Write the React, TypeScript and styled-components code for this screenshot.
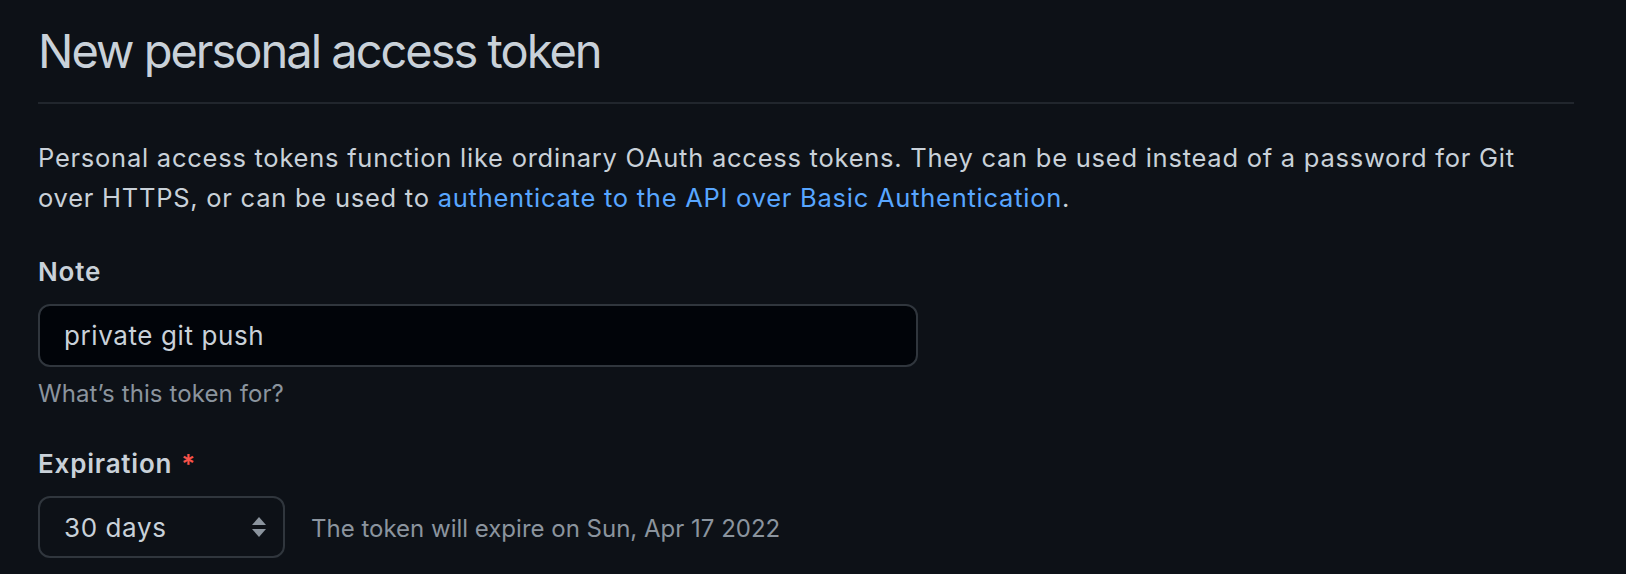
import styled, { createGlobalStyle } from "styled-components";

const GlobalStyle = createGlobalStyle`
  html, body {
    margin: 0;
    padding: 0;
    background: #0d1117;
  }

  body {
    font-family: Inter, "Noto Sans", sans-serif;
    color: #c9d1d9;
  }
`;

const Page = styled.div`
  width: 1536px;
  padding: 21px 0 0 38px;
  min-height: 553px;
`;

const Subhead = styled.h1`
  margin: 0;
  padding-bottom: 21px;
  border-bottom: 2px solid #21262d;
  font-size: 47px;
  line-height: 60px;
  font-weight: 400;
  letter-spacing: -2px;
  color: #c9d1d9;
`;

const Intro = styled.p`
  margin: 34px 0 0;
  font-size: 25.5px;
  line-height: 40px;
  letter-spacing: 0.75px;
  color: #c9d1d9;

  a {
    color: #58a6ff;
    text-decoration: none;
  }
`;

const Field = styled.div<{ $gap: number }>`
  margin-top: ${(p) => p.$gap}px;
  display: flex;
  flex-direction: column;
`;

const Label = styled.label`
  font-size: 26px;
  line-height: 39px;
  font-weight: 600;
  letter-spacing: 0.8px;
  color: #c9d1d9;
  margin-bottom: 13px;

  span {
    color: #f85149;
    margin-left: 9px;
  }
`;

const TextInput = styled.div`
  box-sizing: border-box;
  width: 880px;
  height: 63px;
  padding: 0 24px;
  display: flex;
  align-items: center;
  background: #010409;
  border: 2px solid #30363d;
  border-radius: 12px;
  font-size: 26px;
  letter-spacing: 0.6px;
  color: #c9d1d9;
`;

const Hint = styled.p`
  margin: 9px 0 0;
  font-size: 24px;
  line-height: 36px;
  letter-spacing: 0.1px;
  color: #8b949e;
`;

const Row = styled.div`
  display: flex;
  align-items: center;
  gap: 26px;
`;

const Select = styled.div`
  box-sizing: border-box;
  width: 247px;
  height: 62px;
  padding: 0 16px 0 24px;
  display: flex;
  align-items: center;
  justify-content: space-between;
  background: #0d1117;
  border: 2px solid #30363d;
  border-radius: 12px;
  font-size: 26px;
  letter-spacing: 0.6px;
  color: #c9d1d9;
`;

const Note = styled.span`
  font-size: 24px;
  color: #8b949e;
  padding-top: 2px;
`;

function SortArrows() {
  return (
    <svg width="16" height="20" viewBox="0 0 16 20">
      <path d="M8 0 L15 8 L1 8 Z" fill="#8b949e" />
      <path d="M1 12 L15 12 L8 20 Z" fill="#8b949e" />
    </svg>
  );
}

export default function App() {
  return (
    <>
      <GlobalStyle />
      <Page>
        <Subhead>New personal access token</Subhead>
        <Intro>
          Personal access tokens function like ordinary OAuth access tokens. They can be used instead of a password
          for Git over HTTPS, or can be used to <a href="#">authenticate to the API over Basic Authentication</a>.
        </Intro>

        <Field $gap={34}>
          <Label>Note</Label>
          <TextInput>private git push</TextInput>
          <Hint>What’s this token for?</Hint>
        </Field>

        <Field $gap={32}>
          <Label>
            Expiration<span>*</span>
          </Label>
          <Row>
            <Select>
              30 days
              <SortArrows />
            </Select>
            <Note>The token will expire on Sun, Apr 17 2022</Note>
          </Row>
        </Field>
      </Page>
    </>
  );
}
